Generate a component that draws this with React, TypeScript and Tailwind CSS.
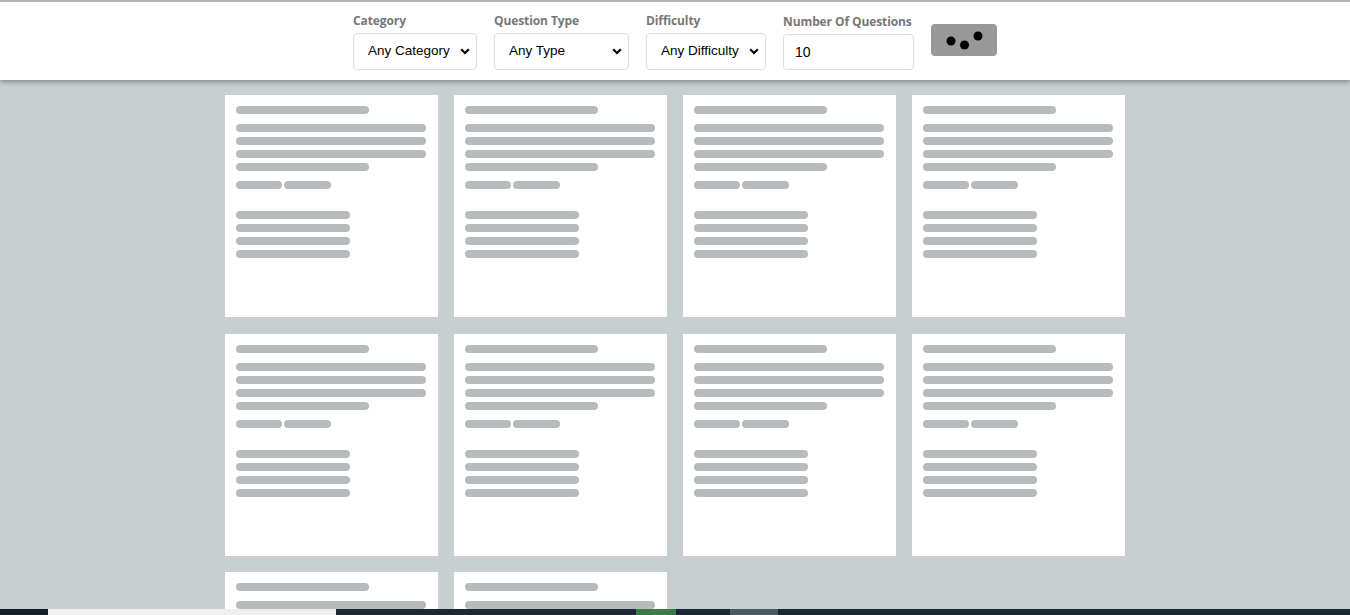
import React from 'react';

const font = { fontFamily: 'Arial, "Liberation Sans", sans-serif' };

const SkeletonCard = () => (
  <div className="h-[222px] w-[213px] bg-white p-[11px]">
    <div className="h-2 w-[133px] rounded-full bg-[#b8bbbd]" />
    <div className="mt-[10px] flex flex-col gap-[5px]">
      <div className="h-2 w-[190px] rounded-full bg-[#b8bbbd]" />
      <div className="h-2 w-[190px] rounded-full bg-[#b8bbbd]" />
      <div className="h-2 w-[190px] rounded-full bg-[#b8bbbd]" />
      <div className="h-2 w-[133px] rounded-full bg-[#b8bbbd]" />
    </div>
    <div className="mt-[10px] flex gap-[2px]">
      <div className="h-2 w-[46px] rounded-full bg-[#b8bbbd]" />
      <div className="h-2 w-[47px] rounded-full bg-[#b8bbbd]" />
    </div>
    <div className="mt-[22px] flex flex-col gap-[5px]">
      <div className="h-2 w-[114px] rounded-full bg-[#b8bbbd]" />
      <div className="h-2 w-[114px] rounded-full bg-[#b8bbbd]" />
      <div className="h-2 w-[114px] rounded-full bg-[#b8bbbd]" />
      <div className="h-2 w-[114px] rounded-full bg-[#b8bbbd]" />
    </div>
  </div>
);

const Field = ({ label, children }: { label: string; children: React.ReactNode }) => (
  <div className="flex flex-col gap-[4px]">
    <label
      className="whitespace-nowrap text-[12px] font-bold leading-[17px] tracking-[-0.1px] text-[#777]"
      style={{ fontFamily: '"Open Sans", "Noto Sans", sans-serif' }}
    >
      {label}
    </label>
    {children}
  </div>
);

const Select = ({ value, width }: { value: string; width: string }) => (
  <div className={`relative ${width}`}>
    <select
      className="h-[37px] w-full appearance-none rounded border border-[#ddd] bg-white pl-[14px] text-[13.5px] text-black"
      style={font}
    >
      <option>{value}</option>
    </select>
    <svg
      className="pointer-events-none absolute right-[7px] top-[15px]"
      width="10"
      height="7"
      viewBox="0 0 10 7"
    >
      <path d="M1.2 1.2 L5 5 L8.8 1.2" fill="none" stroke="#000" strokeWidth="2.2" />
    </svg>
  </div>
);

export default function App() {
  const cards = Array.from({ length: 10 });

  return (
    <div className="min-h-screen bg-[#c8cfd1]" style={font}>
      <header className="flex h-[80px] items-center justify-center gap-[17px] border-t-2 border-[#b5b5b5] bg-white shadow-[0_2px_5px_rgba(0,0,0,0.35)]">
        <Field label="Category">
          <Select value="Any Category" width="w-[124px]" />
        </Field>
        <Field label="Question Type">
          <Select value="Any Type" width="w-[135px]" />
        </Field>
        <Field label="Difficulty">
          <Select value="Any Difficulty" width="w-[120px]" />
        </Field>
        <Field label="Number Of Questions">
          <input
            defaultValue="10"
            className="h-[36px] w-[131px] rounded border border-[#ddd] bg-white px-[11px] text-[14px] text-black"
            style={font}
          />
        </Field>
        <button className="mb-[3px] flex h-[32px] w-[66px] items-center justify-center rounded bg-[#999]">
          <svg width="40" height="20" viewBox="0 0 40 20">
            <circle cx="7" cy="11" r="4.5" fill="#000" />
            <circle cx="20.5" cy="15" r="4.5" fill="#000" />
            <circle cx="34" cy="6" r="4.5" fill="#000" />
          </svg>
        </button>
      </header>

      <main className="mx-auto grid w-[900px] grid-cols-4 gap-x-4 gap-y-[16.5px] pt-[15px]">
        {cards.map((_, i) => (
          <SkeletonCard key={i} />
        ))}
      </main>

      <div className="fixed bottom-0 left-0 right-0 flex h-[6px] bg-[#1c2836]">
        <div className="w-[48px] bg-[#161e28]" />
        <div className="w-[288px] bg-[#f0f0f0]" />
        <div className="w-[300px]" />
        <div className="w-[40px] bg-[#3d7a48]" />
        <div className="w-[54px]" />
        <div className="w-[48px] bg-[#4d5866]" />
      </div>
    </div>
  );
}
